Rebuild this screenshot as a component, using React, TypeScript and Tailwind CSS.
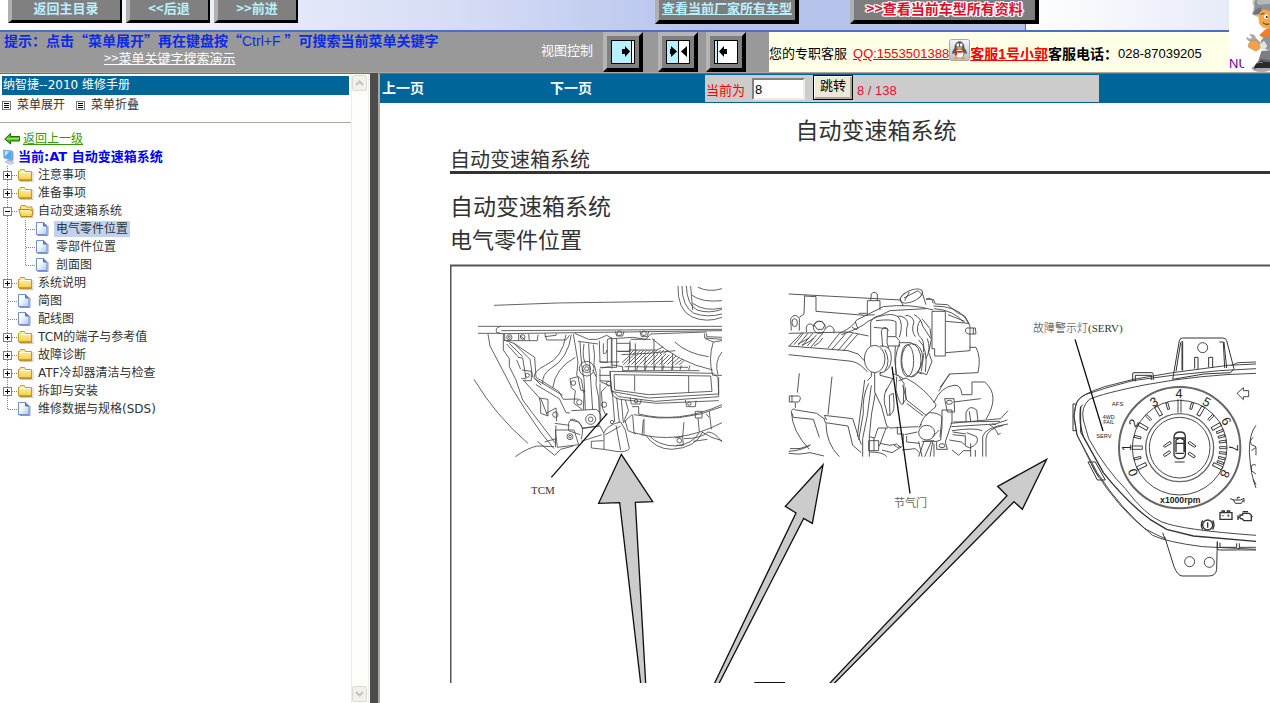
import { useState } from "react";
import clsx from "clsx";

interface TreeNode {
  id: string;
  label: string;
  children?: TreeNode[];
}

const TREE: TreeNode[] = [
  { id: "notice", label: "注意事项", children: [] },
  { id: "prepare", label: "准备事项", children: [] },
  {
    id: "at",
    label: "自动变速箱系统",
    children: [
      { id: "electric", label: "电气零件位置" },
      { id: "parts", label: "零部件位置" },
      { id: "section", label: "剖面图" },
    ],
  },
  { id: "system", label: "系统说明", children: [] },
  { id: "sketch", label: "简图" },
  { id: "wiring", label: "配线图" },
  { id: "tcm", label: "TCM的端子与参考值", children: [] },
  { id: "diagnosis", label: "故障诊断", children: [] },
  { id: "atf", label: "ATF冷却器清洁与检查", children: [] },
  { id: "install", label: "拆卸与安装", children: [] },
  { id: "sds", label: "维修数据与规格(SDS)" },
];

const TOTAL_PAGES = 138;

/* ---------- small icons ---------- */

function FolderIcon({ open }: { open: boolean }) {
  return (
    <svg width="18" height="18" viewBox="0 0 18 18" className="shrink-0">
      <defs>
        <linearGradient id="folder" x1="0" y1="0" x2="0" y2="1">
          <stop offset="0" stopColor="#fff6b8" />
          <stop offset="1" stopColor="#f8cb4a" />
        </linearGradient>
      </defs>
      <path d="M2 15.500h13V6" fill="none" stroke="#c9c9c9" />
      {open ? (
        <>
          <path d="M2.500 13.500V4.500l1-1h4l1 1.500h5.500v3" fill="#fbe68b" stroke="#c09020" />
          <path d="M.7 7.500h11l1.300 1H15l-1 6H3z" fill="url(#folder)" stroke="#b98a10" />
        </>
      ) : (
        <>
          <path d="M.5 13.500V5.500h1l1-2h4l1 2h6v8.500H1z" fill="url(#folder)" stroke="#c79a1e" />
          <path d="M1.500 6.500h11.500" stroke="#fffbe0" />
          <path d="M1 14.200h13" stroke="#a87800" />
        </>
      )}
    </svg>
  );
}

function PageIcon() {
  return (
    <svg width="18" height="18" viewBox="0 0 18 18" className="shrink-0">
      <defs>
        <linearGradient id="page" x1="0" y1="0" x2="1" y2="1">
          <stop offset="0.300" stopColor="#ffffff" />
          <stop offset="1" stopColor="#a9c8f5" />
        </linearGradient>
      </defs>
      <path d="M1.500 15.500h10.500V6" fill="none" stroke="#999" />
      <path d="M.5 2.500h7l3.500 3.500v8.500H.5z" fill="url(#page)" stroke="#6f8fd0" />
      <path d="M7.500 2.500v3.500H11" fill="#6f8fd0" stroke="#4e6cb5" />
    </svg>
  );
}

function Junction({ box, last, open }: { box: boolean; last: boolean; open?: boolean }) {
  return (
    <svg width="18" height="18" viewBox="0 0 18 18" className="shrink-0">
      <path d={last ? "M7.500 0v9" : "M7.500 0v18"} stroke="#808080" strokeDasharray="1 1" />
      <path d="M8 9.500h10" stroke="#808080" strokeDasharray="1 1" />
      {box && (
        <>
          <rect x="3.500" y="5.500" width="8" height="8" fill="#fff" stroke="#808080" />
          <path d={open ? "M5 9.500h5" : "M5 9.500h5M7.500 7v5"} stroke="#000" />
        </>
      )}
    </svg>
  );
}

function MenuBoxIcon() {
  return (
    <svg width="9" height="9" viewBox="0 0 9 9">
      <rect x=".5" y=".5" width="8" height="8" fill="#fff" stroke="#777" />
      <path d="M2 2.500h5M2 4.500h5M2 6.500h5" stroke="#000" />
    </svg>
  );
}

function BackArrowIcon() {
  return (
    <svg width="16" height="14" viewBox="0 0 16 14">
      <path d="M.7 7L6.500 1.500v3h9v4.500h-9v3z" fill="#4fbf1c" stroke="#1c6a0a" />
      <path d="M3 6.800h12" stroke="#b5f27c" />
    </svg>
  );
}

function ComputerIcon() {
  return (
    <svg width="14" height="16" viewBox="0 0 14 16">
      <path d="M9 1.500l2.500 1v9l-2.500 1z" fill="#8d9fc4" />
      <path d="M1.500 1l8 1v9l-7.500-2z" fill="#4aaaf2" stroke="#8fa5d8" />
      <path d="M2.500 2l5 .5-4.500 5z" fill="#b9e4ff" />
      <path d="M5 10.500l4 1v2l-4-1z" fill="#a8b2cc" />
      <path d="M3 13l3-1.500 6 2-3.500 2z" fill="#d3d8e8" stroke="#8e95b4" strokeWidth=".5" />
    </svg>
  );
}

function ViewIcon({ mode }: { mode: "right" | "both" | "left" }) {
  return (
    <svg width="24" height="24" viewBox="0 0 24 24">
      <rect x=".5" y=".5" width="23" height="23" fill="#fff" stroke="#000" />
      {mode === "right" && (
        <>
          <rect x="1" y="1" width="19" height="22" fill="#b9f0ff" />
          <path d="M20.500 0v24" stroke="#000" />
          <path d="M11 9h3V6l5 5.500-5 5.500v-3h-3z" />
        </>
      )}
      {mode === "both" && (
        <>
          <rect x="1" y="1" width="11" height="22" fill="#b9f0ff" />
          <path d="M12.500 0v24" stroke="#000" />
          <path d="M4 9h1V6l6 5.500L5 17v-3H4zM21 6v11l-6-5.500z" />
        </>
      )}
      {mode === "left" && (
        <>
          <rect x="1" y="1" width="3" height="22" fill="#b9f0ff" />
          <path d="M3.500 0v24" stroke="#000" />
          <path d="M13 9h-3V6l-5 5.500 5 5.500v-3h3z" />
        </>
      )}
    </svg>
  );
}

function PenguinIcon() {
  return (
    <svg width="21" height="22" viewBox="0 0 21 22">
      <defs>
        <linearGradient id="qq" x1="0" y1="0" x2="0" y2="1">
          <stop offset="0" stopColor="#f4f8fa" />
          <stop offset="1" stopColor="#b5bdc2" />
        </linearGradient>
      </defs>
      <rect x=".5" y=".5" width="20" height="21" rx="2" fill="url(#qq)" stroke="#a3a9ad" />
      <path d="M5.500 9c0-9 10-9 10 0 2 3 3 5 2 6l-2-1c0 6-10 6-10 0l-2 1c-1-1 0-3 2-6z" fill="#585c60" />
      <ellipse cx="10.500" cy="14.500" rx="4" ry="4" fill="#fff" />
      <ellipse cx="8.800" cy="6" rx="1.300" ry="1.800" fill="#fff" />
      <ellipse cx="12.200" cy="6" rx="1.300" ry="1.800" fill="#fff" />
      <ellipse cx="10.500" cy="9" rx="3" ry="1" fill="#f3a51e" />
      <path d="M5 10.500c3 2 8 2 11 0v2c-3 1.500-6 1.500-8 1v3l-2-.5v-3z" fill="#e2241b" />
      <path d="M5 18.500h4v1.500H5zM12 18.500h4v1.500h-4z" fill="#f39c12" />
    </svg>
  );
}

function Mascot() {
  return (
    <svg width="26" height="72" viewBox="72 0 78 216" className="shrink-0">
      <ellipse cx="125" cy="205" rx="30" ry="11" fill="#aaa" />
      <path d="M98 0q-2 14 4 19l-6 22q10 12 24 8l-2 20q8 16 32 18V0z" fill="#c4c4c4" />
      <path d="M106 0q-6 10-2 22l-2 12q10 8 24-4l24 4V0z" fill="#8d9196" />
      <path d="M112 0q-3 10 4 15l34-4V0z" fill="#b4b8bc" />
      <path d="M97 42q10-16 26-20l2 14q-10 12-28 6z" fill="#6f7378" />
      <path d="M118 40q-6 8-2 18 0 16 12 24l22 6V34l-20-6z" fill="#f4a74c" />
      <path d="M122 44q6-6 12-2M128 68q8 8 20 4" fill="none" stroke="#5b3413" strokeWidth="3" />
      <ellipse cx="138" cy="50" rx="6" ry="7" fill="#fff" />
      <circle cx="140" cy="51" r="3" fill="#222" />
      <path d="M80 112l10 6 7-6-8-8q16-2 18 10l20 20-8 8-22-18q-16 2-17-12z" fill="#a9adb2" stroke="#777" />
      <path d="M118 106l16-16q8-5 16-4v28l-14 4z" fill="#ff7d18" />
      <path d="M88 128q-6 6-2 14l22 12 16-12-12-20-12-2z" fill="#f2a24c" stroke="#9c5a1b" />
      <path d="M122 122l14-14 14 4v38l-24-4z" fill="#8f949a" />
      <path d="M118 134l14-12 10 16-14 18z" fill="#e3e3e3" />
      <path d="M124 154l26-4v38l-36-3z" fill="#7b7f83" />
      <path d="M122 176l28 4v22l-34-8z" fill="#5e6266" />
      <path d="M102 204q4-18 20-22 16 6 28 4v18h-40q-8 4-8 0z" fill="#29292b" />
      <path d="M110 190q8-6 18-2" fill="none" stroke="#999" strokeWidth="3" />
    </svg>
  );
}

/* ---------- drawings of the figure ---------- */

function ControlUnitDrawing() {
  return (
    <g transform="translate(460 270) scale(.33333)" fill="none" stroke="#444" strokeWidth="2.500">
      <path d="M102 106l190-7 348-5" />
      <path d="M654 48q-2 70 40 92 46 20 92 2M666 48q0 62 36 82 40 14 84 2M679 48q2 56 32 72 36 12 75-2M692 48q2 26 6 72M714 52q34 16 72 4M696 76q30 22 90 16M698 100q36 26 88 14" />
      <path d="M54 169h732M54 190h70M122 169q-18 4-12 18l14 4 662-9M124 182l662-4" />
      <path d="M84 192l6 36 68 130 40 64 48 70 36 44M130 192v48l18 26 0 24 20 40 20 60 30 40 70 92M42 328q66 110 162 192M166 560q36-26 66-32l50 2M132 210l30 10 62 42 4 60 68 42 14 24 46-1" />
      <circle cx="148" cy="202" r="8" /><circle cx="148" cy="202" r="3" />
      <path d="M134 192v20h98l2-18M176 192v20M206 192l2 20M180 196l16 14M254 190l6 20h58l10-14M254 200l34-4 2-6" />
      <circle cx="188" cy="201" r="7" />
      <path d="M140 222l34 38M148 220l40 40M162 220l48 48 8 54M174 262l14 2 10 62h-14M170 270l12 28M186 300l28 4v28h-24M190 330l54 60 18 46M238 384l26 4v50l-22-8v-28zM258 430l30-16 2 40" />
      <circle cx="202" cy="316" r="6" />
      <circle cx="286" cy="434" r="8" />
      <path d="M318 194q-10 70-62 92-36 18-34 38l22 22M334 194q-10 72-62 102-26 16-24 46M346 262q-60 32-68 92M224 326l84 50M228 344l70 42 20 42 12 1" />
      <path d="M340 192l14 84-4 40 14 12 8 46-2 46M360 216q4 80 12 110l4 94M372 222q-8 50 10 64M386 220l4 80 8 120M400 224q6 36 2 60 10 20 6 60l8 40 2 46M354 214l60 8M330 326l24-6 8 40 14 4M330 326l4 28 12 8-4 38 24 18M398 300l10 20" />
      <circle cx="380" cy="296" r="22" /><circle cx="380" cy="296" r="12" /><circle cx="380" cy="296" r="6" />
      <circle cx="340" cy="339" r="7" /><circle cx="358" cy="397" r="8" /><circle cx="392" cy="448" r="15" /><circle cx="392" cy="448" r="7" />
      <path d="M334 422l74-4q18 10 14 30l-6 20-48 6-12-18-26-6M326 460q6-18 20-10 20 10 22 32l-4 26M326 460v22l34 12M286 480h56l14 44-64 8zM284 460l44 6M288 466l-2 66M232 514l52 42 18-18 38-10M254 516l34-10" />
      <circle cx="330" cy="500" r="9" /><circle cx="330" cy="500" r="4" />
      <path d="M344 190l42 18h26l28-12 18 10 60-4 40 6 14-16 168-6M418 212l2 64 22 2V208l14-4v92M418 276h60M430 220v30q10 4 10-10M454 206v74M470 206v86h-50M424 294l28-4M420 296v36l30 2M418 316h32M470 220h40l-2 60M510 212v32h-40M472 244h40M418 334l34 14M452 284l36 6v14" />
      <path d="M484 254l82-4 80-8M506 240h84l20-10M488 302h230M494 290l190 2M526 220v82M582 206v94M638 250v50M556 260l-2 42M606 260v42M512 208h60" />
      <path d="M486 278l26-24M490 284l34-32M502 284l32-32M514 284l32-32M526 284l32-32M538 284l32-32M550 284l32-32M562 284l32-32M574 284l32-32M586 284l32-32M598 284l30-30M610 284l28-28M622 284l26-26M634 284l24-22M646 284l20-16M658 284l14-12M510 252l12-12M520 252l12-12M530 252l12-12M540 252l12-12M550 252l12-12M560 252l12-12M570 252l12-12M580 252l12-12M590 252l12-12M600 252l12-12M610 252l14-12M504 300l4-14M530 300l4-14M556 300l4-14M582 300l4-14M608 300l4-14M634 300l4-14M660 300l4-14M686 300l4-14" />
      <circle cx="478" cy="190" r="7" /><circle cx="552" cy="190" r="7" />
      <path d="M466 184l4 14h18l4-14M540 184l4 16h18l4-16" />
      <path d="M576 206q80 72 182 94M644 216q40 36 102 44M736 206l24 10 26-4M734 190v14l52 4M760 216q-16 50-2 100h28M786 246q-24 30-12 68M740 190v10l46 2" />
      <path d="M450 304l310 6 14 12 2 50-210 12-112-20zM462 314l290 4 4 46-190 10-102-14zM524 316v48M686 318v50M450 304l4 56 22 20 110 14 190-14v-58M454 360q2 24 26 28l110 12 186-8M510 382l4 20h26l4-14M676 390l4 20h26l2-18" />
      <circle cx="528" cy="393" r="5" /><circle cx="688" cy="401" r="5" /><circle cx="446" cy="341" r="7" />
      <path d="M458 378l6 78M470 382l8 76M484 388l6 70 26-24M496 390l10 34M438 350l-14 16 4 50 10 20M454 348l4 30M420 340v110" />
      <circle cx="432" cy="404" r="8" />
      <circle cx="456" cy="456" r="5" />
      <path d="M516 410h20v22q120 30 250-28M522 434q140 30 264-24M518 434l4 54q130 40 264-30M504 424l-10 24 10 34 24 10M552 446v50M672 456l-4 44M714 444l4 42M550 450l-4 46M748 424l6 54M706 424h20v20h-20zM738 432l10 10M556 494q30 44 80 44 70-4 92-52M568 498q30 30 80 30 50-6 70-40M726 486q30 20 60 26M672 506q50 0 72-20 20 0 42 30M644 504l24-4 2 26h-22M700 514l42-6" />
      <circle cx="658" cy="512" r="7" />
      <path d="M432 488q10-24 50-32l14 24 12 56q-8 12-40 8l-36-6z" fill="#fff" />
      <path d="M468 466l14 74M430 512l-36 2v20l38 4M364 514l62-20M366 476l54-8 12 22M436 494l46-26" />
      <path d="M442 430L274 622" stroke="#111" strokeWidth="4" />
    </g>
  );
}

function EngineDrawing() {
  return (
    <g transform="translate(770 270) scale(.33333)" fill="none" stroke="#444" strokeWidth="2.700">
      <path d="M56 72l336 18M104 76l-2 56-14 10M138 80v44l146 12 30-2M104 78l34 2M292 92h38v28M292 92v44M302 92l2-20q8-10 18 0v20M266 130h24M56 254l190 20q26 6 46 32M56 228l178 14 30 10 40 42 0 26-12 12" />
      <path d="M56 190l180-4 60 12M64 182l-2-36q14-20 26 0v36M56 230l40-42M72 224l28-34M84 226l30-36M96 228l32-38M84 222q20-10 34-18M96 226q30-14 34-22M112 228l28-34M122 232l38-44M132 228q20-10 26-24M174 234l36-46M186 238l42-48M204 242l44-52M220 242l44-50" />
      <ellipse cx="74" cy="158" rx="8" ry="12" />
      <circle cx="148" cy="172" r="18" /><path d="M132 164l10-10h14l8 12-6 12h-16z" />
      <path d="M110 186q-6-26 14-24l8 8M168 176q8-14 20-4 6 6 4 18" />
      <path d="M210 190q40-20 50-40l80-40q80-10 150 10M214 194q60-20 80-40l66-32 108-6M246 172l16 8M256 156l8 20" />
      <ellipse cx="424" cy="78" rx="36" ry="17" transform="rotate(-24 424 78)" />
      <path d="M390 86l10 22M458 72l10 32M402 84l42-22 10 10M404 92l14-26M468 88l22 0 6 14 36 2 30 24 22 10 14 24M468 88q16-10 22 12M492 116q60 4 90 42M490 108q70 0 96 36l14 24v74l-72 6M534 134l50 20M528 154l66 6" />
      <path d="M302 228v-72q10-20 32-18M312 172l40 4v24h26v-44q-10-10-60-4M352 200q-4 16 4 36M338 230l-4-48q10-20 22 0M334 138q30-10 50 2 18 20 4 62M384 138q26 0 30 24-6 12-4 38M406 136q22 0 26 20-10 26 4 44M432 134q20 8 26 34l26 40-8 40 10 26-16 40-22-8M452 150q-16 20-6 46 20 14 14 50M456 146l24 30 4 28M446 210q30 26 20 96M378 200l10 12v18M424 218l-34 0M462 248l-8 56M472 206q12 30-4 60" />
      <path d="M486 124h40v134h-32v-22h-8z" fill="#fff" />
      <path d="M590 174h26l2 18h-24q-14-8-4-18M610 174v18M598 232h20q16 30 6 76l-86 4-32 52M540 312l-30 40" />
      <path d="M330 228q34-4 34 36 0 40-36 46M344 238q20 36 0 66" />
      <ellipse cx="314" cy="267" rx="31" ry="41" fill="#fff" />
      <path d="M388 222q-18 40-8 92l20 12M376 228q-4 40 2 84M354 228h30M424 220q34 4 34 46-4 40-34 54M366 310l20 8M440 306l16 6" />
      <ellipse cx="424" cy="271" rx="29" ry="50" />
      <ellipse cx="412" cy="272" rx="19" ry="48" />
      <path d="M314 308v58l20 42 16 60 10 6 84-4M332 306l-2 10 40 10M350 356q-14 30-2 60l4 20q22 0 20-36l-2-30-12 6 2 62M372 320l-26 46M380 320l-2 40q10 40 18 44l12-16-2-36M388 322l14 18-2 62" />
      <path d="M386 332l22-8q56 30 90 80 0 10-8 12l-22 20-58-46-12-44M410 400l50 38M382 470v22h18v34M450 470q8-30 28-42 30 0 38 14l-6 60" />
      <ellipse cx="470" cy="488" rx="24" ry="22" fill="#fff" />
      <path d="M446 474l8-12M488 500l20-20M492 398q20-48 60-52 20-4 24 28l30 0v-38h38q48 40 4 112M552 396l80-10M524 386h28l2 40h-22zM516 420h30v36l-20 60 6 22h-32v-24l12-4 4-40z" />
      <ellipse cx="538" cy="397" rx="9" ry="6" /><ellipse cx="516" cy="527" rx="9" ry="6" />
      <path d="M542 460l150-14 22-24M544 470l132-8 36-12M546 482q70-10 90 0M550 456l140-2M588 454v-26q10-26 32-8l4 34M602 454l-4-30M658 464q20 10 26 30l8-4M666 462l12 2M714 462q-70 10-76 38v60M700 466q-50 10-52 40v54" />
      <path d="M88 310l-6 58M186 320l-12 114M284 330l-22 170M296 340q-20 40-16 90l-14 80M304 346l-12 90-14 70v54M316 370q-14 60-18 130v60M58 378h28q8 4 4 12l-4 6H58zM66 376v20M76 398v16" />
      <path d="M64 422q6-10 14-2l62 10 22 16M66 430l4 12 60 6 18 54M64 424q2 60 54 114M162 436l86 10 16 50 10 28M162 444l4 14 68 10 14 58 26 22M168 460q0 60 40 100M164 438l6 12M56 544q40-2 66-20M56 550q30 6 64-2l42 10M60 536q30 4 60-10" />
      <path d="M298 500l16 4 10-30 30 0M348 474l-20 54M296 512h30v30h-30zM312 504v38M330 520l30 6 20-4 12 10-26 16-30-8M300 546q40 0 50 14M372 526q10 10 24 4M404 494l38-8M410 498v18l38 4M446 560l16-46 30-2M464 560l20-46M480 560l8-44M492 560v-40M446 514l10 46M456 514h44M548 486l40 6M548 494l38 4v30l14 6q30-14 20-34l-30-12M538 510l36 6 10 8M546 540l20 16 14-14 22 0M602 560v-40M616 540v20M396 540l40-4 12 12" />
      <path d="M366 290L420 670" stroke="#111" strokeWidth="4" />
    </g>
  );
}

const DIAL_NUMBERS = [
  { n: "0", x: 340, y: 487, r: -110 },
  { n: "1", x: 320, y: 413, r: -90 },
  { n: "2", x: 342, y: 340, r: -62 },
  { n: "3", x: 402, y: 277, r: -30 },
  { n: "4", x: 477, y: 253, r: 0 },
  { n: "5", x: 560, y: 277, r: 30 },
  { n: "6", x: 618, y: 334, r: 60 },
  { n: "7", x: 638, y: 413, r: 90 },
  { n: "8", x: 614, y: 491, r: 116 },
];

const MAJOR_TICKS = [-116, -90, -60, -30, 30, 60, 116];
const MINOR_TICKS = [-104, -76, -46, -16, 16, 46, 68, 75, 82, 90, 97, 104, 110];

function ClusterDrawing() {
  return (
    <g transform="translate(1020 310) scale(.33333)" fill="none" stroke="#333" strokeWidth="2.700">
      <path d="M708 176l-110 6-140 14-120 16-80 22-62 20q-26 14-28 30l-6 34 10 60 60 110q70 110 166 188 40 20 150 34l160 8" />
      <path d="M708 162l-84 4-166 22-118 20-86 22q-60 20-76 36-16 20-16 56l8 50 54 110q70 110 150 174l60 30M708 190q-170 4-330 34-130 26-170 44-26 24-18 62l16 56q50 90 110 150 60 80 110 100 60 24 282 40" />
      <path d="M182 290q-6 50 8 90l60 108q70 88 140 140l50 30 80 20 188 16" strokeWidth="4" />
      <path d="M708 156l-54 2-20 8M708 712h-50M708 720h-52" />
      <path d="M167 282h-8v80h10M188 284l-6 8v76l8 12" strokeWidth="3" />
      <path d="M204 456h22l30 54h-24zM214 462l22 40M338 214v-22q0-4 4-4h54q4 0 4 8v14M346 214v-18h48v14" strokeWidth="3" />
      <path d="M458 208l20-116q2-8 10-8h120q10 0 12 8l22 84-10 12-80 4zM468 184l14-86 6-4v88M612 96l8 78M598 96h12l4 78M524 176v-34h10v36M566 172v-30h12v32M486 100v80" strokeWidth="3" />
      <circle cx="548" cy="113" r="15" />
      <path d="M434 680l28 90q10 26 24 28h80q22 0 24-20l2-84M428 668l6 18M592 696v18q0 6 6 6h52q8 0 8-6v-14M600 698v14h50v-12" strokeWidth="3" />
      <circle cx="509" cy="755" r="15" /><circle cx="568" cy="757" r="15" />

      <circle cx="479" cy="413" r="182" strokeWidth="6" stroke="#666" />
      <circle cx="479" cy="413" r="102" stroke="#666" strokeWidth="4" />
      <circle cx="479" cy="413" r="91" />
      <circle cx="479" cy="413" r="142" />
      {MAJOR_TICKS.map((a) => (
        <path key={a} d="M474 271v30h10v-30z" transform={`rotate(${a} 479 413)`} />
      ))}
      {MINOR_TICKS.map((a) => (
        <path key={a} d="M476 273v20h6v-20z" transform={`rotate(${a} 479 413)`} />
      ))}
      <path d="M474 268v40M483 268v40" />

      <g strokeWidth="4">
        <path d="M462 380q2-14 18-14t16 14v54q-2 12-16 12t-18-12zM468 390l12-6 12 6v10h-24zM468 402v24M492 402v24M466 430h26M464 384h30" />
        <path d="M430 408l20-14 4 6-20 12zM430 434l18-12 4 6-18 12zM528 408l-20-14-4 6 20 12zM526 438l-18-12-4 6 18 12zM464 456h30" strokeWidth="3" />
      </g>
      <path d="M708 346q-20 24-20 80 4 70 20 108M700 382q-14 10-6 22l14 6M694 422l14-10v24M708 466q-16-10-14 16l14 10M700 508l8 16" />
      <path d="M651 250l19-17v9h16v18h-16v9z" />
      <g strokeWidth="4">
        <circle cx="563" cy="645" r="15" /><path d="M548 631q-8 14 0 28M578 631q8 14 0 28M563 637v16" />
        <path d="M600 608h36v20h-36zM606 608v-5h7v5M622 608v-5h7v5" />
        <path d="M605 617h8M621 617h8M625 613v8" strokeWidth="2" />
        <path d="M654 616v14M654 623h6v-8h8v-5h20l6 6v16h-22l-6-6h-6M694 620h4M668 605h16" />
        <path d="M630 566l12 4h20l10-5v12M640 570l6 10h18l6-10M652 568v-6h8" strokeWidth="3" />
      </g>
      <path d="M165 88l84 275" stroke="#111" strokeWidth="4" />

      <g fill="#222" stroke="none" fontFamily='"Liberation Sans", sans-serif' textAnchor="middle">
        {DIAL_NUMBERS.map((d) => (
          <text
            key={d.n}
            x={d.x}
            y={d.y + 12}
            fontSize="38"
            transform={`rotate(${d.r} ${d.x} ${d.y})`}
          >
            {d.n}
          </text>
        ))}
        <text x="481" y="580" fontSize="26" fontWeight="bold">x1000rpm</text>
        <text x="293" y="287" fontSize="18">AFS</text>
        <text x="266" y="326" fontSize="16">4WD</text>
        <text x="266" y="342" fontSize="16">FAIL</text>
        <text x="252" y="385" fontSize="17">SERV</text>
      </g>
    </g>
  );
}

function LocationFigure() {
  return (
    <svg
      width="850"
      height="419"
      viewBox="450 264 850 419"
      className="block shrink-0"
      role="img"
      aria-label="电气零件位置"
    >
      <path d="M450.500 683V265.500H1300" fill="none" stroke="#555" strokeWidth="2" />
      <ControlUnitDrawing />
      <EngineDrawing />
      <ClusterDrawing />
      <g transform="translate(580 440) scale(.33333)" fill="#ccc" stroke="#111" strokeWidth="4">
        <path d="M124 43l94 142-52 2 32 560h-14L119 188l-63 2z" />
        <path d="M729 75l-32 175-26-15-263 513h-13L648 219l-32-20z" />
        <path d="M1400 58l-73 150-25-23-557 563h-13L1281 167l-28-28z" />
        <path d="M523 728h92" />
      </g>
      <g fontFamily='"Liberation Serif", "Noto Sans CJK SC", serif' fontSize="11" fill="#333">
        <text x="531" y="494">TCM</text>
        <text x="1033" y="332" fontWeight="300">故障警示灯(SERV)</text>
        <text x="894" y="507" fill="#666">节气门</text>
      </g>
    </svg>
  );
}

/* ---------- page parts ---------- */

function TopBar() {
  const navButton =
    "h-[23px] shrink-0 border-t-0 border-r-2 border-b-[3px] border-l-4 border-r-black border-b-black border-l-[#b0b0b0] bg-[#808080] pb-[4px] text-[13px] leading-4 font-bold whitespace-nowrap text-[#b9f0ff]";
  const wideButton =
    "h-6 shrink-0 border-t-0 border-r-4 border-b-4 border-l-4 border-r-black border-b-black border-l-[#b0b0b0] bg-[#7d7d7d] pb-[4px] leading-4 font-bold whitespace-nowrap";
  return (
    <div className="flex h-8 border-b-2 border-[#4a70c4]">
      <div className="flex w-[1026px] shrink-0 items-start border-r border-r-[#7d6a68] bg-linear-to-r from-white via-[#d5dcf5] via-45% to-[#b4c2ec] to-70%">
        <div className="ml-2 flex gap-1">
          <button className={clsx(navButton, "w-[114px]")}>返回主目录</button>
          <button className={clsx(navButton, "w-[84px]")}>&lt;&lt;后退</button>
          <button className={clsx(navButton, "w-[84px]")}>&gt;&gt;前进</button>
        </div>
        <button className={clsx(wideButton, "ml-auto w-[144px] text-[13px] text-[#b9f0ff] underline")}>
          查看当前厂家所有车型
        </button>
        <div className="relative z-10 flex w-[226px] shrink-0 pl-[51px]">
          <button
            className={clsx(
              wideButton,
              "w-[189px] text-sm text-[#e0102c] [text-shadow:1px_1px_0_#fff,-1px_-1px_0_#fff,1px_-1px_0_#fff,-1px_1px_0_#fff,2px_0_1px_#fff,-2px_0_1px_#fff]"
            )}
          >
            &gt;&gt;查看当前车型所有资料
          </button>
        </div>
      </div>
      <div className="flex-1 bg-linear-to-r from-white to-[#e6ebf8]" />
    </div>
  );
}

function ToolBar() {
  const viewButton =
    "h-10 w-10 shrink-0 border-4 border-t-[#b5b5b5] border-r-black border-b-black border-l-[#b5b5b5] bg-[#808080] p-1";
  return (
    <div className="flex h-10 bg-[#999]">
      <div className="w-[541px] shrink-0 pl-1 whitespace-nowrap">
        <p className="text-sm leading-[17px] font-bold text-[#0a2be8]">
          提示：点击“菜单展开”再在键盘按“
          <span className="font-['Liberation_Sans'] font-normal">Ctrl+F </span>
          ”可搜索当前菜单关键字
        </p>
        <a href="#demo" className="ml-[100px] block text-[13px] leading-4 text-white underline">
          &gt;&gt;菜单关键字搜索演示
        </a>
      </div>
      <div className="flex w-[228px] shrink-0 items-center text-[13px] text-white">
        <span className="w-[62px] pb-1">视图控制</span>
        <button aria-label="展开菜单" className={viewButton}>
          <ViewIcon mode="right" />
        </button>
        <button aria-label="平分视图" className={clsx(viewButton, "ml-[15px]")}>
          <ViewIcon mode="both" />
        </button>
        <button aria-label="收起菜单" className={clsx(viewButton, "ml-2")}>
          <ViewIcon mode="left" />
        </button>
      </div>
      <div className="flex flex-1 items-center bg-[#ffffe8] pt-1 font-['Liberation_Sans','Noto_Sans_CJK_SC',sans-serif] text-[13px] whitespace-nowrap text-black">
        <span className="mr-[6px]">您的专职客服</span>
        <a href="#qq" className="text-[#f00] underline">QQ:1553501388</a>
        <span className="mb-2">
          <PenguinIcon />
        </span>
        <a href="#service" className="text-sm font-bold text-[#f00] underline">客服1号小郭</a>
        <b className="text-sm">客服电话：</b>
        <span>028-87039205</span>
      </div>
    </div>
  );
}

function TreeRow({
  node,
  last,
  nested,
  parentLast,
  selected,
  onSelect,
}: {
  node: TreeNode;
  last: boolean;
  nested?: boolean;
  parentLast?: boolean;
  selected: string;
  onSelect: (id: string) => void;
}) {
  const [open, setOpen] = useState(!!node.children?.length);
  const isFolder = !!node.children;

  return (
    <li>
      <button
        className="flex h-[18px] items-center whitespace-nowrap"
        onClick={() => (isFolder ? setOpen(!open) : onSelect(node.id))}
      >
        {nested && (
          <svg width="18" height="18" viewBox="0 0 18 18" className="shrink-0">
            {!parentLast && <path d="M7.500 0v18" stroke="#808080" strokeDasharray="1 1" />}
          </svg>
        )}
        <Junction box={isFolder} last={last} open={open} />
        {isFolder ? <FolderIcon open={open} /> : <PageIcon />}
        <span
          className={clsx(
            "h-4 px-[2px] leading-4",
            selected === node.id && "bg-[#c1d2ee]"
          )}
        >
          {node.label}
        </span>
      </button>
      {open && node.children && (
        <ul>
          {node.children.map((c, i) => (
            <TreeRow
              key={c.id}
              node={c}
              nested
              parentLast={last}
              last={i === node.children!.length - 1}
              selected={selected}
              onSelect={onSelect}
            />
          ))}
        </ul>
      )}
    </li>
  );
}

function Sidebar() {
  const [selected, setSelected] = useState("electric");
  return (
    <aside className="flex w-[370px] shrink-0 border-t border-[#716f64] bg-white font-['DejaVu_Sans','Noto_Sans_CJK_SC',sans-serif] text-xs text-[#333]">
      <div className="w-[351px] shrink-0 pt-[2px]">
        <h2 className="mr-[2px] ml-[2px] h-[19px] bg-[#069] pl-px leading-[18px] text-white">
          纳智捷--2010 维修手册
        </h2>
        <div className="flex h-7 border-b border-[#aca899] pl-[2px] leading-5">
          <button className="flex h-5 items-center gap-[6px]">
            <MenuBoxIcon />
            菜单展开
          </button>
          <button className="ml-[11px] flex h-5 items-center gap-[6px]">
            <MenuBoxIcon />
            菜单折叠
          </button>
        </div>
        <a href="#up" className="mt-[7px] flex h-[18px] items-center gap-[3px] pl-1 text-[#390]">
          <BackArrowIcon />
          <span className="leading-[18px] underline">返回上一级</span>
        </a>
        <p className="flex h-[18px] items-center gap-[2px] pl-[2px] text-[13px] leading-[18px] font-bold text-[#00f]">
          <ComputerIcon />
          当前:AT 自动变速箱系统
        </p>
        <ul>
          {TREE.map((n, i) => (
            <TreeRow
              key={n.id}
              node={n}
              last={i === TREE.length - 1}
              selected={selected}
              onSelect={setSelected}
            />
          ))}
        </ul>
      </div>
      <div className="flex w-[18px] flex-col justify-between border-x border-[#eeede5] bg-[#fefefb] py-px">
        {["M4 10l3.500-3.500L11 10", "M4 6l3.500 3.500L11 6"].map((d) => (
          <svg key={d} width="15" height="16" viewBox="0 0 15 16">
            <rect x=".5" y=".5" width="14" height="15" rx="1.500" fill="#f1f0ea" stroke="#dddbd0" />
            <path d={d} fill="none" stroke="#c4c4bc" strokeWidth="2" />
          </svg>
        ))}
      </div>
    </aside>
  );
}

function Pager() {
  const [page, setPage] = useState("8");
  return (
    <nav className="flex h-[29px] shrink-0 bg-[#069] text-sm text-white">
      <a href="#prev" className="w-[168px] shrink-0 pl-[2px] leading-[26px] font-bold">上一页</a>
      <a href="#next" className="w-[157px] shrink-0 pl-[2px] leading-[26px] font-bold">下一页</a>
      <form
        className="my-px flex w-[394px] items-start bg-[#ccc] pl-px font-['Liberation_Sans','Noto_Sans_CJK_SC',sans-serif] text-[13px] text-[#f00]"
        onSubmit={(e) => e.preventDefault()}
      >
        <label htmlFor="page" className="w-[46px] pt-[6px] leading-5">当前为</label>
        <input
          id="page"
          value={page}
          onChange={(e) => setPage(e.target.value)}
          className="mt-[3px] h-[22px] w-[53px] border-2 border-t-[#808080] border-r-[#eeede5] border-b-[#eeede5] border-l-[#808080] bg-white pl-px text-black"
        />
        <button className="ml-2 h-[25px] w-10 border border-black bg-[#ece9d8] pb-[3px] leading-[18px] text-black shadow-[inset_1px_1px_0_#fff,inset_-2px_-2px_0_#aca899]">
          跳转
        </button>
        <span className="ml-1 pt-[6px] leading-5 text-[#f00830]">8 / {TOTAL_PAGES}</span>
      </form>
    </nav>
  );
}

export default function App() {
  return (
    <div className="flex h-screen flex-col overflow-hidden bg-white font-['Noto_Sans_CJK_SC',sans-serif]">
      <header className="flex shrink-0 border-b border-[#aca899]">
        <div className="min-w-0 flex-1">
          <TopBar />
          <ToolBar />
        </div>
        <div className="flex w-[41px] shrink-0 items-end bg-white">
          <span className="w-[15px] shrink-0 overflow-hidden font-['Liberation_Sans'] text-[13px] leading-4 text-[#609]">
            NU
          </span>
          <Mascot />
        </div>
      </header>

      <div className="flex min-h-0 flex-1">
        <Sidebar />
        <div className="w-2 shrink-0 bg-[#4c4c4c]" />
        <main className="min-w-0 flex-1 overflow-hidden border-t border-l-2 border-t-[#716f64] border-l-[#aca899] bg-white">
          <Pager />
          <article className="-mr-8 ml-[70px] text-[#333]">
            <h1 className="pt-[10px] text-center text-[23px] leading-8">自动变速箱系统</h1>
            <p className="mt-[2px] border-b-[3px] border-[#333] text-xl leading-6">自动变速箱系统</p>
            <h2 className="mt-[15px] text-[23px] leading-8">自动变速箱系统</h2>
            <h3 className="mb-2 text-[22px] leading-[35px]">电气零件位置</h3>
            <LocationFigure />
          </article>
        </main>
      </div>
    </div>
  );
}
